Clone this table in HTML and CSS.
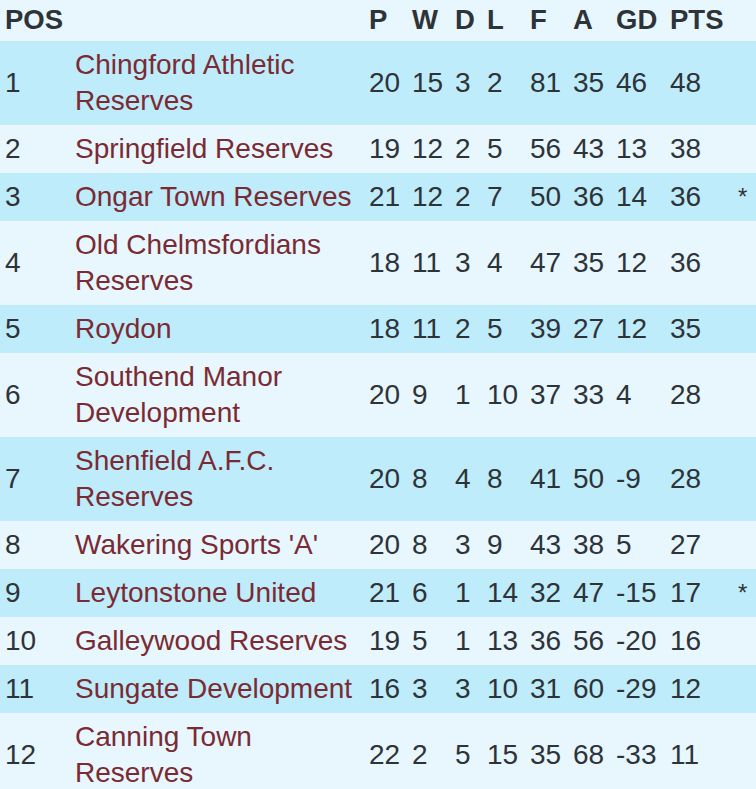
FILE: index.html
```html
<!DOCTYPE html>
<html lang="en">
<head>
<meta charset="utf-8">
<title>League Table</title>
<link rel="stylesheet" href="styles.css">
</head>
<body>
<table class="league">
  <colgroup>
    <col class="c-pos"><col class="c-team"><col class="c-n"><col class="c-n"><col class="c-d"><col class="c-n"><col class="c-n"><col class="c-n"><col class="c-gd"><col class="c-pts"><col class="c-note">
  </colgroup>
  <thead>
    <tr><th>POS</th><th></th><th>P</th><th>W</th><th>D</th><th>L</th><th>F</th><th>A</th><th>GD</th><th>PTS</th><th></th></tr>
  </thead>
  <tbody>
    <tr><td>1</td><td class="team">Chingford Athletic Reserves</td><td>20</td><td>15</td><td>3</td><td>2</td><td>81</td><td>35</td><td>46</td><td>48</td><td></td></tr>
    <tr><td>2</td><td class="team">Springfield Reserves</td><td>19</td><td>12</td><td>2</td><td>5</td><td>56</td><td>43</td><td>13</td><td>38</td><td></td></tr>
    <tr><td>3</td><td class="team">Ongar Town Reserves</td><td>21</td><td>12</td><td>2</td><td>7</td><td>50</td><td>36</td><td>14</td><td>36</td><td class="note">*</td></tr>
    <tr><td>4</td><td class="team">Old Chelmsfordians Reserves</td><td>18</td><td>11</td><td>3</td><td>4</td><td>47</td><td>35</td><td>12</td><td>36</td><td></td></tr>
    <tr><td>5</td><td class="team">Roydon</td><td>18</td><td>11</td><td>2</td><td>5</td><td>39</td><td>27</td><td>12</td><td>35</td><td></td></tr>
    <tr><td>6</td><td class="team">Southend Manor Development</td><td>20</td><td>9</td><td>1</td><td>10</td><td>37</td><td>33</td><td>4</td><td>28</td><td></td></tr>
    <tr><td>7</td><td class="team">Shenfield A.F.C. Reserves</td><td>20</td><td>8</td><td>4</td><td>8</td><td>41</td><td>50</td><td>-9</td><td>28</td><td></td></tr>
    <tr><td>8</td><td class="team">Wakering Sports 'A'</td><td>20</td><td>8</td><td>3</td><td>9</td><td>43</td><td>38</td><td>5</td><td>27</td><td></td></tr>
    <tr><td>9</td><td class="team">Leytonstone United</td><td>21</td><td>6</td><td>1</td><td>14</td><td>32</td><td>47</td><td>-15</td><td>17</td><td class="note">*</td></tr>
    <tr><td>10</td><td class="team">Galleywood Reserves</td><td>19</td><td>5</td><td>1</td><td>13</td><td>36</td><td>56</td><td>-20</td><td>16</td><td></td></tr>
    <tr><td>11</td><td class="team">Sungate Development</td><td>16</td><td>3</td><td>3</td><td>10</td><td>31</td><td>60</td><td>-29</td><td>12</td><td></td></tr>
    <tr><td>12</td><td class="team">Canning Town Reserves</td><td>22</td><td>2</td><td>5</td><td>15</td><td>35</td><td>68</td><td>-33</td><td>11</td><td></td></tr>
  </tbody>
</table>
</body>
</html>
```
FILE: styles.css
```css
html, body {
  margin: 0;
  padding: 0;
  background: #e7f7fd;
}
.league {
  width: 756px;
  table-layout: fixed;
  border-collapse: collapse;
  font-family: "Liberation Sans", Arial, sans-serif;
  font-size: 28px;
  color: #2e3338;
}
.c-pos { width: 70px; }
.c-team { width: 294px; }
.c-n { width: 43px; }
.c-d { width: 32px; }
.c-gd { width: 54px; }
.c-pts { width: 68px; }
.c-note { width: 23px; }
.league th {
  text-align: left;
  font-weight: bold;
  font-size: 27.5px;
  line-height: 35px;
  padding: 2px 0 4px 5px;
  background: #e7f7fd;
  white-space: nowrap;
}
.league td {
  text-align: left;
  vertical-align: middle;
  line-height: 36px;
  padding: 6px 0 6px 5px;
  white-space: nowrap;
}
.league td.team {
  color: #7a2a33;
  white-space: normal;
}
.league tbody tr:nth-child(odd) td { background: #bfecfa; }
.league tbody tr:nth-child(even) td { background: #e7f7fd; }
.league td.note {
  font-size: 24px;
  padding-left: 5px;
}
```
